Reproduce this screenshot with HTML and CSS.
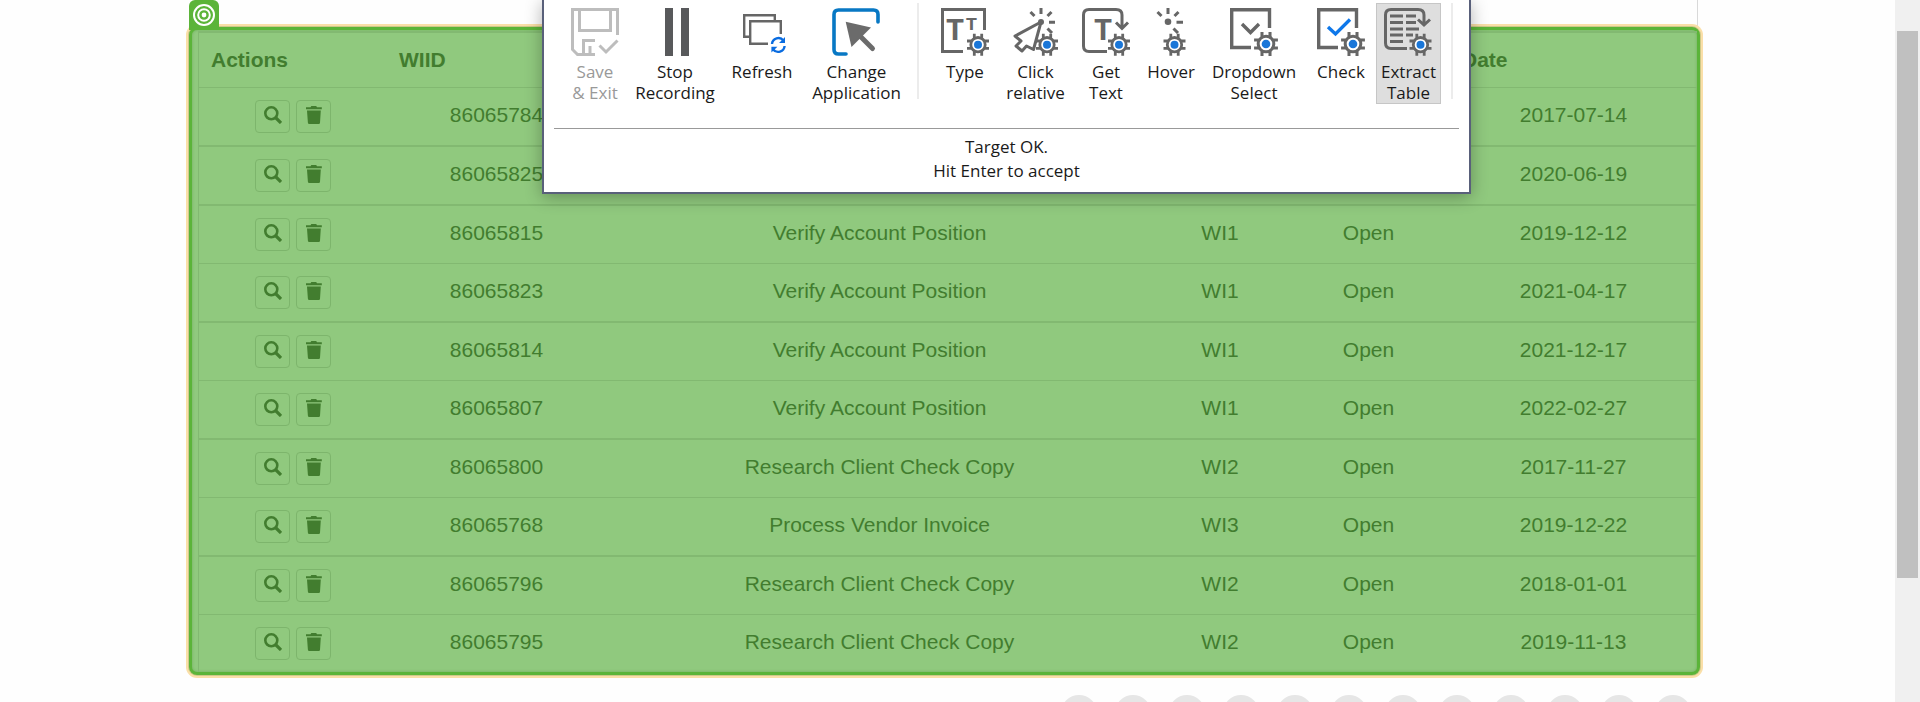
FILE: index.html
```html
<!DOCTYPE html>
<html lang="en">
<head>
<meta charset="utf-8">
<title>Work Items</title>
<link rel="stylesheet" href="styles.css">
</head>
<body>
<svg class="defs" aria-hidden="true">
  <symbol id="gear" viewBox="-12 -12 24 24">
    <path d="M-3.7-11V11M3.7-11V11M-11-3.7H11M-11 3.7H11" fill="none" stroke="#666" stroke-width="2.8"/>
    <circle r="7.2" fill="#fff" stroke="#666" stroke-width="2.8"/>
    <circle r="4" fill="#1976d8" stroke="none"/>
  </symbol>
  <symbol id="search" viewBox="0 0 18 18">
    <circle cx="7.3" cy="7.3" r="6" fill="none" stroke="currentColor" stroke-width="2.6"/>
    <path d="M11.5 11.5L17 17" stroke="currentColor" stroke-width="3.2"/>
  </symbol>
  <symbol id="trash" viewBox="0 0 18 18">
    <path d="M1 1.2H5.5L6.3 0H11.2L12 1.2H16.8V3.2H1ZM2 4.6H15.8L15 16.8Q14.9 18 13.8 18H4.2Q3 18 2.9 16.8Z" fill="currentColor"/>
  </symbol>
</svg>
<div class="page">
  <main class="content">
    <div class="card-edge"></div>
    <section class="selection">
      <span class="target">
        <svg viewBox="0 0 24 24" width="24" height="24" fill="none" stroke="#fff" stroke-width="2"><circle cx="12" cy="12" r="10"/><circle cx="12" cy="12" r="5.8"/><circle cx="12" cy="12" r="2.4" fill="#fff" stroke="none"/></svg>
      </span>
      <table class="items">
        <colgroup><col class="c-actions"><col class="c-id"><col><col class="c-type"><col class="c-status"><col class="c-date"></colgroup>
        <thead><tr><th>Actions</th><th>WIID</th><th></th><th></th><th></th><th>Date</th></tr></thead>
        <tbody id="rows"></tbody>
      </table>
    </section>
    <nav class="pager" aria-label="Pages" id="pager"></nav>
  </main>
  <div class="scrollbar"><div class="thumb"></div></div>
</div>

<div class="recorder">
  <div class="tools">
    <button class="tool" disabled>
      <svg viewBox="0 0 48 48" fill="none" stroke="#bdbdbd" stroke-width="3"><path d="M24 46.5H6.5L1.5 41.5V1.5H46.5V27M8.5 1.5V22.5H39.5V1.5M12.5 47V32.5H24M19 38V47M28.5 37.5L35 44L46.5 32.5"/></svg>
      <span>Save<br>&amp; Exit</span></button>
    <button class="tool">
      <svg viewBox="0 0 48 48" fill="#58595b"><path d="M14 0H22V48H14ZM30 0H38V48H30Z"/></svg>
      <span>Stop<br>Recording</span></button>
    <button class="tool">
      <svg viewBox="0 0 48 48" fill="none" stroke="#666" stroke-width="2.4"><path d="M12 28.8H6.2V7.2H36.8V12M30 35.8H12.2V13.2H42.8V26"/><path d="M34 36A6.4 6.4 0 0 1 45.5 32.6M46.6 38A6.4 6.4 0 0 1 35.2 41.4" stroke="#0a6ce0"/><path d="M47 29V35H41ZM33.4 44.5V38.8H39.4Z" fill="#0a6ce0" stroke="none"/></svg>
      <span>Refresh</span></button>
    <button class="tool">
      <svg viewBox="0 0 48 48" fill="none" stroke-width="3.6" stroke-linecap="round"><path d="M46 14V6.500Q46 2 41.500 2H6.500Q2 2 2 6.500V41.500Q2 46 6.500 46H14" stroke="#0878c4"/><path d="M28 28L40.500 40.500" stroke="#6b6b6b" stroke-width="5"/><path d="M13.700 13.700L39 19.500L19.500 39Z" fill="#6b6b6b"/></svg>
      <span>Change<br>Application</span></button>
    <i class="divider"></i>
    <button class="tool">
      <svg viewBox="0 0 48 48"><path d="M22 43.500H1.500V1.500H43.500V22" fill="none" stroke="#666" stroke-width="3"/><g class="mark"><text x="14" y="32" font-size="31">T</text><text x="30.500" y="22" font-size="19">T</text></g><use href="#gear" x="25" y="24.700" width="24" height="24"/></svg>
      <span>Type</span></button>
    <button class="tool">
      <svg viewBox="0 0 48 48" fill="none" stroke="#666" stroke-width="3"><path d="M29 14L3 28L9 33L4 38L10 43L14.500 38L21.500 41.500Z" stroke-linejoin="round"/><circle cx="29" cy="14" r="3" fill="#666" stroke="none"/><path d="M29 0V6M18.500 4L22.500 8M39.500 4L35.500 8M37 14.300H43M35.500 20.500L40 25"/><use href="#gear" x="23" y="24.700" width="24" height="24"/></svg>
      <span>Click<br>relative</span></button>
    <button class="tool">
      <svg viewBox="0 0 48 48" fill="none" stroke="#666" stroke-width="3"><path d="M25 43.500H7Q1.500 43.500 1.500 38V7Q1.500 1.500 7 1.500H34Q40 1.500 40 7V19M34 14.500L40 20.500L46 14.500"/><text class="mark" x="21" y="32" font-size="31">T</text><use href="#gear" x="25" y="24.700" width="24" height="24"/></svg>
      <span>Get<br>Text</span></button>
    <button class="tool">
      <svg viewBox="0 0 48 48" fill="none" stroke="#666" stroke-width="3"><circle cx="21" cy="13.700" r="3.300" fill="#666" stroke="none"/><path d="M21 0V6M10.500 4L14.500 8M31.500 4L27.500 8M29.500 14.300H36M26.500 20.500L31 25"/><use href="#gear" x="15.500" y="24.700" width="24" height="24"/></svg>
      <span>Hover</span></button>
    <button class="tool">
      <svg viewBox="0 0 48 48" fill="none" stroke="#666" stroke-width="3.400"><path d="M21 39.500H1.700V1.700H39.500V20M12 16L20.500 24.500L29 16"/><use href="#gear" x="23" y="23" width="26" height="26"/></svg>
      <span>Dropdown<br>Select</span></button>
    <button class="tool">
      <svg viewBox="0 0 48 48" fill="none" stroke="#666" stroke-width="3.400"><path d="M21 39.500H1.700V1.700H39.500V20"/><path d="M11 19L18.500 26L33 11.500" stroke="#0f78ea"/><use href="#gear" x="23" y="23" width="26" height="26"/></svg>
      <span>Check</span></button>
    <button class="tool active" aria-pressed="true">
      <svg viewBox="0 0 48 48" fill="none" stroke="#666" stroke-width="3"><path d="M23 40.500H7Q1.500 40.500 1.500 35V7Q1.500 1.500 7 1.500H34Q40 1.500 40 7V16M34 11.500L40 17L46 11.500M6 8H19M22 8H32M6 14.500H19M22 14.500H32M6 21H19M22 21H35M6 27H19M22 27H29M6 33.500H19"/><use href="#gear" x="24.500" y="24.700" width="24" height="24"/></svg>
      <span>Extract<br>Table</span></button>
    <i class="divider"></i>
  </div>
  <p class="status">Target OK.<br>Hit Enter to accept</p>
</div>
<script src="app.js"></script>
</body>
</html>
```

FILE: styles.css
```css
* { box-sizing: border-box; }
body {
  margin: 0;
  background: #fefefe;
  color: #427d2f;
  font: 21px/30px "Liberation Sans", Arial, sans-serif;
}
.defs { position: absolute; width: 0; height: 0; }
.page { display: flex; height: 100vh; overflow: hidden; }
.content { flex: 1; min-width: 0; padding: 0 195px 0 189px; }
.card-edge { height: 27px; margin-right: 2px; border-right: 1px solid #d9d9d9; }

.selection {
  position: relative;
  padding: 1px 0 0 6px;
  background: #90c97e;
  border: 3px solid #5bb439;
  border-radius: 8px;
  box-shadow: 0 0 0 1px #cfc98a, 0 0 0 3px #fadfa8, inset 0 0 3px #6fae5c;
}
.target {
  position: absolute;
  left: -3px;
  top: -30px;
  display: flex;
  justify-content: center;
  width: 30px;
  height: 30px;
  padding-top: 3px;
  background: #5bb439;
  border-radius: 6px 6px 0 0;
}

.items {
  width: 100%;
  table-layout: fixed;
  border-collapse: separate;
  border-spacing: 0;
  border: solid #82b971;
  border-width: 2px 0 0 1px;
}
.c-actions { width: 188px; }
.c-id { width: 219px; }
.c-type { width: 134px; }
.c-status { width: 163px; }
.c-date { width: 247px; }
.items th {
  height: 55px;
  padding: 0 12px;
  text-align: left;
  border-bottom: 1px solid #82b971;
}
.items td {
  height: 58px;
  padding: 0 0 3px;
  text-align: center;
  border-bottom: 1px solid #82b971;
}
.items tbody tr:first-child td,
.items tbody tr:nth-child(even) td { height: 59px; border-bottom-width: 2px; }
.items tbody tr:last-child td { height: 57px; border-bottom: 0; }
.items td.actions { padding: 0; }
.row-actions { display: flex; justify-content: center; gap: 6px; }
.icon-btn {
  display: flex;
  justify-content: center;
  width: 35px;
  height: 33px;
  padding: 5px 0 0;
  color: #427d2f;
  background: none;
  border: 1px solid #7db56c;
  border-radius: 4px;
}
.icon-btn svg { width: 18px; height: 18px; }

.pager { display: flex; justify-content: flex-end; gap: 18px; padding: 20px 9px 0 0; }
.page-btn { width: 36px; height: 36px; padding: 0; border: 0; border-radius: 50%; background: #e6e6e6; }

.scrollbar { width: 25px; padding: 31px 2px 0; background: #f0f0f0; }
.thumb { height: 81.5%; background: #c0c0c0; }

.recorder {
  position: absolute;
  top: 0;
  left: 542px;
  width: 929px;
  padding: 3px 10px 9px;
  color: #1a1a1a;
  background: #fff;
  border: 2px solid #59607a;
  border-top: 0;
  box-shadow: 0 3px 16px rgba(0, 0, 0, .3);
  font: 17px/21px "Open Sans", "Noto Sans", sans-serif;
}
.tools {
  display: grid;
  grid-template-columns: 60px 100px 74px 115px 7px 88px 53px 88px 42px 124px 50px 85px 2px;
  justify-items: center;
  align-items: start;
  height: 126px;
  padding-left: 11px;
  border-bottom: 1px solid #999;
}
.tool {
  display: flex;
  flex-direction: column;
  align-items: center;
  gap: 5px;
  padding: 4px 4px 0;
  height: 101px;
  color: inherit;
  font: inherit;
  background: none;
  border: 1px solid transparent;
}
.tool svg { width: 48px; height: 48px; overflow: visible; }
.tool:disabled { color: #999; }
.tool.active { background: #dedede; border-color: #c6c6c6; }
.mark { fill: #666; stroke: none; font-family: "Liberation Mono", monospace; font-weight: bold; text-anchor: middle; }
.divider { width: 2px; height: 96px; background: #ececec; }
.status { margin: 6px 0 0; text-align: center; line-height: 24px; }
```

FILE: app.js
```js
const items = [
  ["86065784", "Verify Account Position", "WI1", "Open", "2017-07-14"],
  ["86065825", "Verify Account Position", "WI1", "Open", "2020-06-19"],
  ["86065815", "Verify Account Position", "WI1", "Open", "2019-12-12"],
  ["86065823", "Verify Account Position", "WI1", "Open", "2021-04-17"],
  ["86065814", "Verify Account Position", "WI1", "Open", "2021-12-17"],
  ["86065807", "Verify Account Position", "WI1", "Open", "2022-02-27"],
  ["86065800", "Research Client Check Copy", "WI2", "Open", "2017-11-27"],
  ["86065768", "Process Vendor Invoice", "WI3", "Open", "2019-12-22"],
  ["86065796", "Research Client Check Copy", "WI2", "Open", "2018-01-01"],
  ["86065795", "Research Client Check Copy", "WI2", "Open", "2019-11-13"]
];
// The first two rows keep only the cells that the recorder leaves uncovered.
document.getElementById("rows").innerHTML = items.map((item, row) => {
  const cells = item.map((text, col) => `<td>${row < 2 && col > 0 && col < 4 ? "" : text}</td>`).join("");
  return `<tr><td class="actions"><div class="row-actions">
    <button class="icon-btn" aria-label="View"><svg><use href="#search"/></svg></button>
    <button class="icon-btn" aria-label="Delete"><svg><use href="#trash"/></svg></button>
  </div></td>${cells}</tr>`;
}).join("");

document.getElementById("pager").innerHTML = Array.from({ length: 12 }, (_, i) =>
  `<button class="page-btn" aria-label="Page control ${i + 1}"></button>`).join("");
```
